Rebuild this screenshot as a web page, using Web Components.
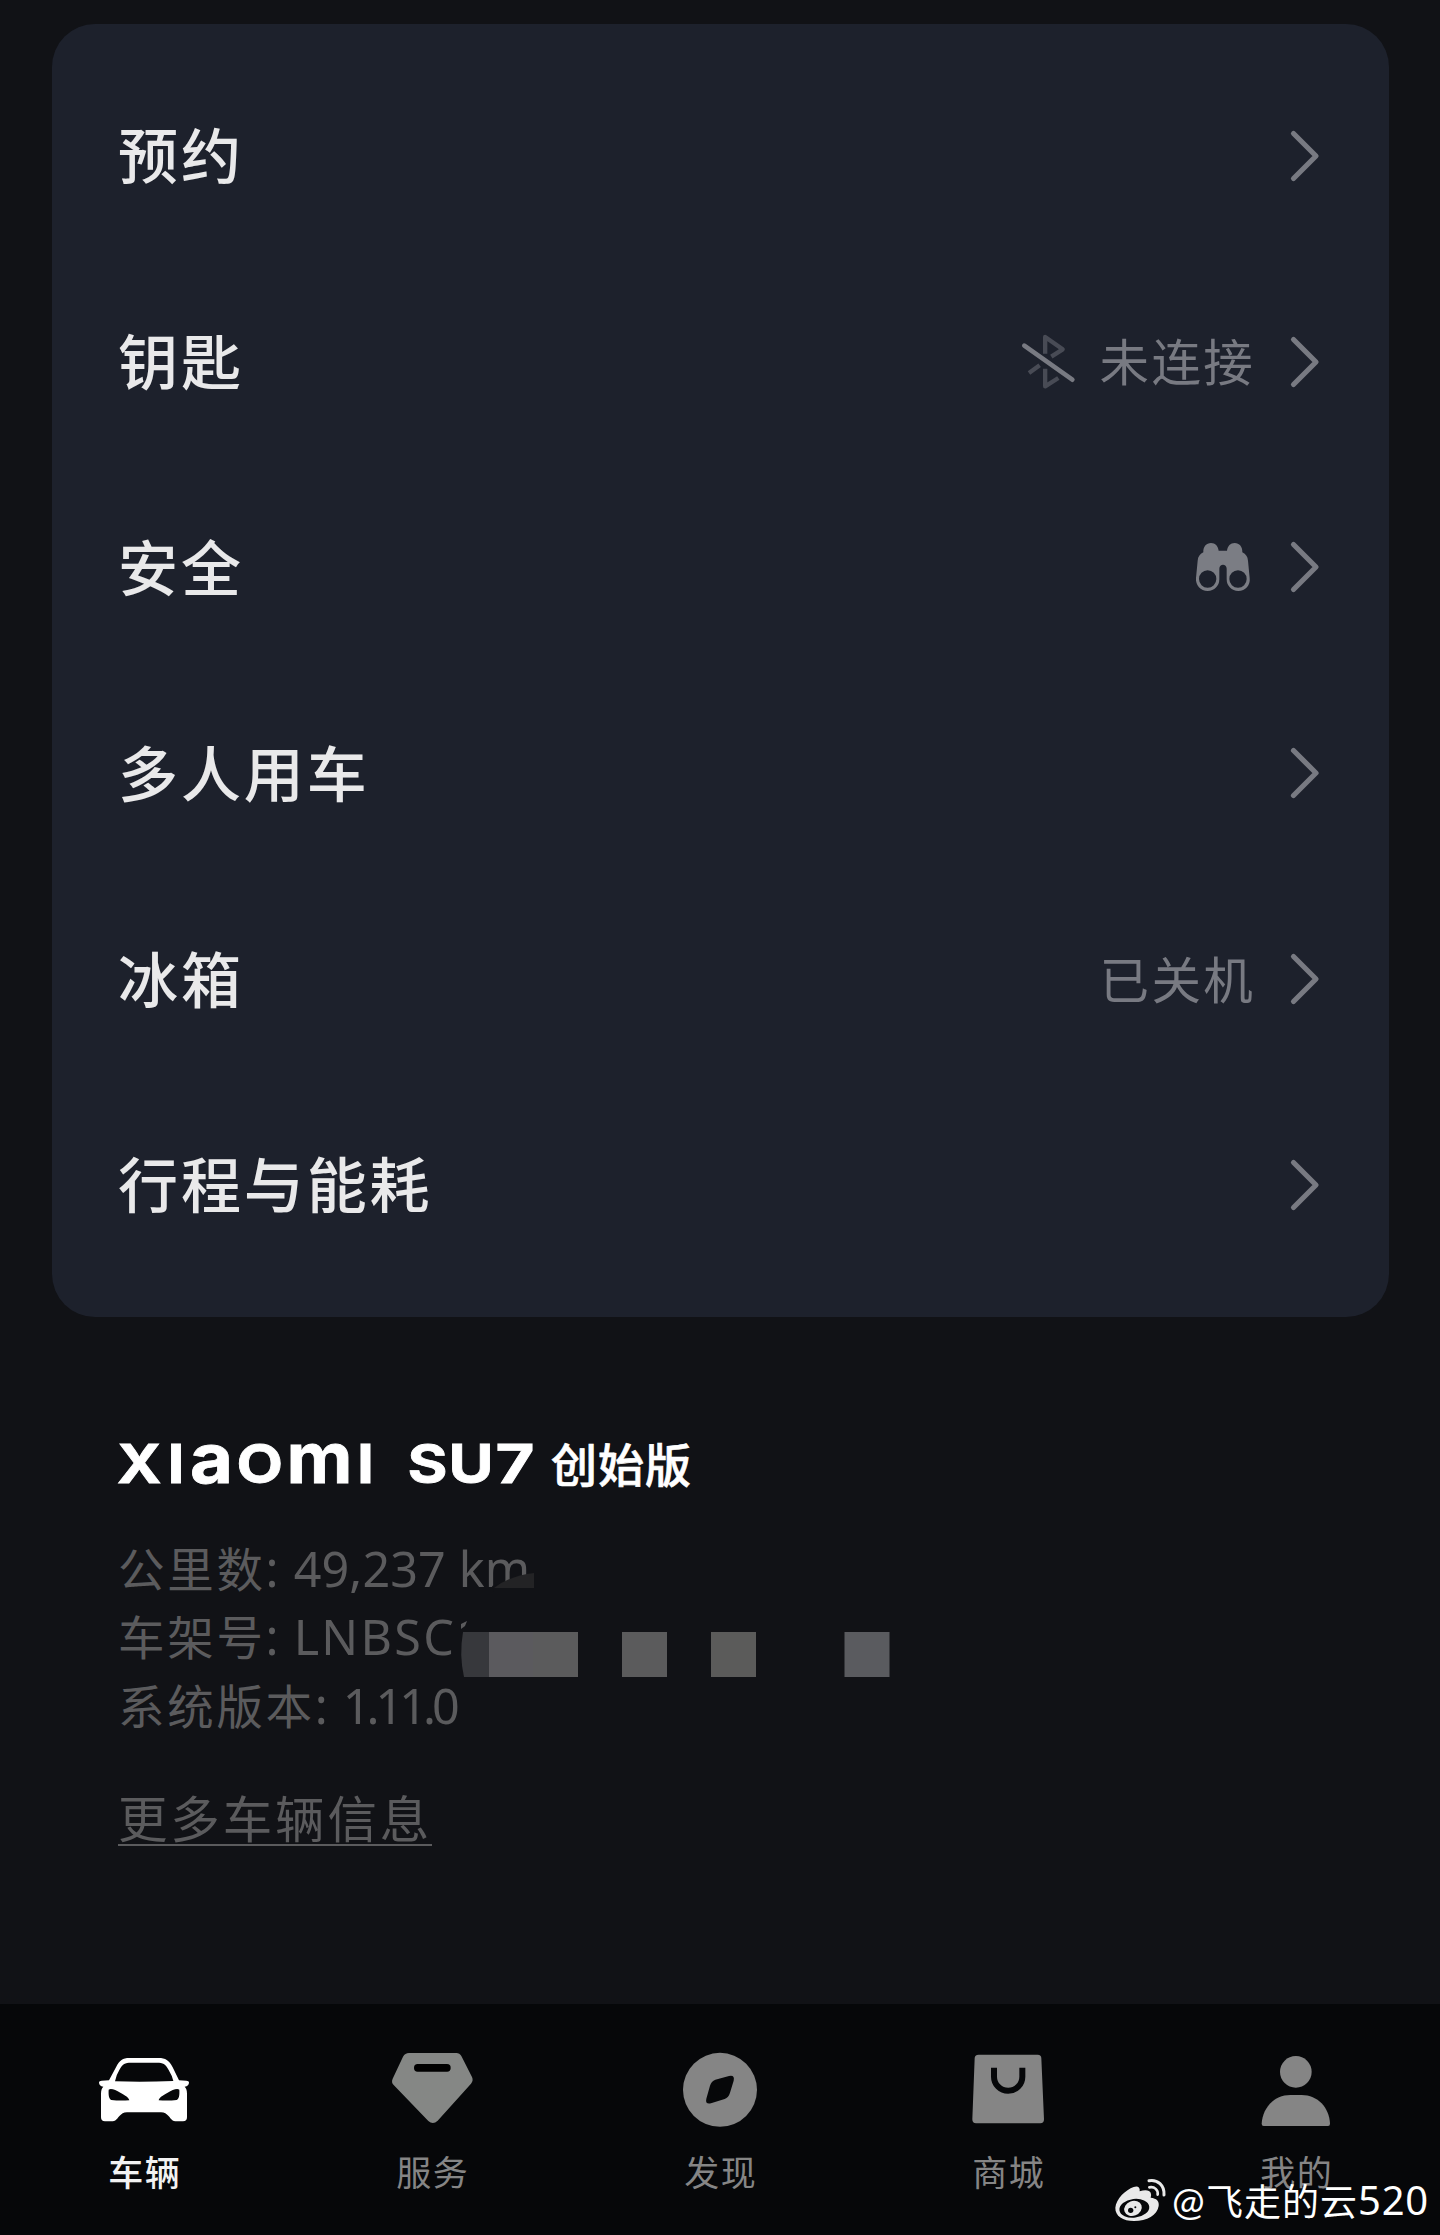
<!DOCTYPE html>
<html lang="zh-CN">
<head>
<meta charset="utf-8">
<title>车辆</title>
<style>
html,body{margin:0;background:#111216}
body{width:1440px;height:2235px;overflow:hidden;font-family:"Noto Sans","Noto Sans CJK SC",sans-serif}
</style>
</head>
<body>
<vehicle-page></vehicle-page>
<script>
const CJK = '"Noto Sans CJK SC",sans-serif';
function define(name, html) {
  const t = document.createElement('template');
  t.innerHTML = html;
  customElements.define(name, class extends HTMLElement {
    constructor() {
      super();
      this.attachShadow({mode: 'open'}).appendChild(t.content.cloneNode(true));
    }
  });
}

define('bluetooth-off-icon', `
<style>:host{display:block;width:56px;height:57px}svg{display:block}</style>
<svg width="56" height="57" viewBox="126 100 168 171" fill="none" stroke-linecap="round" stroke-linejoin="round">
<g stroke="#484b55" stroke-width="13" stroke-linecap="butt"><path d="M198.500 162V112L251 149L217 171M182 197L150 220M198.500 207V260L238 235"/></g>
<path d="M136 138L280 240" stroke="#787a82" stroke-width="14"/></svg>`);

define('sentry-icon', `
<style>:host{display:block;width:56px;height:52px;margin-right:4px}svg{display:block}</style>
<svg width="56" height="52" viewBox="645 723 168 156">
<path fill="#7b7d84" fill-rule="evenodd" d="M670 757C669 740 679 729 693 729C706 729 714 738 716 752H741C743 738 751 729 764 729C778 729 788 740 787 757C798 763 803 770 804 782L809 834C812 856 796 873 775 873C755 873 740 858 740 838V806C740 790 718 790 718 806V838C718 858 703 873 683 873C662 873 646 856 648 834L653 782C654 770 659 763 670 757ZM683 811A26 26 0 1 0 683 863A26 26 0 1 0 683 811ZM774 811A26 26 0 1 0 774 863A26 26 0 1 0 774 811Z"/></svg>`);

define('menu-row', `
<style>
:host{display:flex;align-items:center;justify-content:space-between;height:205.8px;padding:0 68.500px 0 66.500px;box-sizing:border-box;font-family:${CJK}}
.label{font-size:60px;font-weight:500;letter-spacing:2.9px;line-height:88px;color:#e9e9ea;padding-bottom:5px}
.end{display:flex;align-items:center;gap:31.500px}
.status{display:flex;align-items:center;gap:22.500px;font-size:49.500px;letter-spacing:2.3px;line-height:72px;color:#787a82}
::slotted(span){padding-bottom:3px}
svg{display:block}
</style>
<span class="label"><slot></slot></span>
<span class="end"><span class="status"><slot name="status"></slot></span>
<svg width="34" height="56" viewBox="0 0 34 56" fill="none" stroke="#787a82" stroke-width="5.200" stroke-linecap="round" stroke-linejoin="round"><path d="M6.500 5.500L29 28L6.500 50.500"/></svg></span>`);

define('menu-card', `
<style>:host{display:block;margin:24px 51px 0 51.500px;padding:29px 0;height:1293px;box-sizing:border-box;background:#1d212c;border-radius:43px}</style>
<slot></slot>`);

define('model-title', `
<style>
:host{display:flex;align-items:center;height:110px;font-family:${CJK}}
svg{display:block}
span{font-size:46px;letter-spacing:1px;line-height:68px;font-weight:500;color:#fff;-webkit-text-stroke:.7px #fff;padding:0 0 3px 9px}
text{font-family:Inter,sans-serif;font-weight:700;fill:#fff;stroke:#fff;stroke-width:.8px}
</style>
<svg width="434" height="110" viewBox="108 1408 434 110" style="margin-left:-10px">
<text y="1482.500" font-size="53.500" lengthAdjust="spacingAndGlyphs"><tspan x="117" textLength="44.500" lengthAdjust="spacingAndGlyphs">X</tspan><tspan x="167.500" textLength="17" lengthAdjust="spacingAndGlyphs">I</tspan><tspan x="190" font-size="69" textLength="43" lengthAdjust="spacingAndGlyphs">a</tspan><tspan x="236.500" textLength="46.500" lengthAdjust="spacingAndGlyphs">O</tspan><tspan x="286.500" font-size="69" textLength="66" lengthAdjust="spacingAndGlyphs">m</tspan><tspan x="357" textLength="17" lengthAdjust="spacingAndGlyphs">I</tspan><tspan> </tspan><tspan x="407.500" textLength="40" lengthAdjust="spacingAndGlyphs">S</tspan><tspan x="448.500" textLength="45" lengthAdjust="spacingAndGlyphs">U</tspan><tspan x="495.500" textLength="39" lengthAdjust="spacingAndGlyphs">7</tspan></text>
</svg><span><slot></slot></span>`);

define('info-line', `
<style>
:host{display:flex;align-items:baseline;height:68.400px;line-height:68.400px;font-size:46.500px;letter-spacing:2.700px;color:#5b5b5d;white-space:pre;font-family:${CJK}}
.v{font-family:"Noto Sans",sans-serif;font-size:48.500px;letter-spacing:1.200px}
::slotted(span){letter-spacing:var(--track,0)}
</style>
<span><slot></slot></span><span class="v">: <slot name="value"></slot></span>`);

define('redaction-mask', `
<style>:host{position:absolute;left:450px;top:1560px;display:block}svg{display:block}</style>
<svg width="450" height="125" viewBox="450 1560 450 125">
<path fill="#111216" d="M492 1586L534 1574V1592H494Z"/>
<path fill="#232325" d="M494 1588Q509 1576 534 1573V1588Z"/>
<path fill="#5b5b5d" d="M461 1624L467 1621L465 1626L461 1629Z"/>
<path fill="#37383c" d="M463 1632H489V1677H464Q459 1655 463 1632Z"/>
<path fill="#5b5a5e" d="M489 1632H534V1677H489Z"/>
<path fill="#5b5b5c" d="M533 1632H578V1677H533ZM622 1632H667V1677H622Z"/>
<path fill="#5b5b5a" d="M711 1632H756V1677H711Z"/>
<path fill="#5a5b5f" d="M844.500 1632H889.500V1677H844.500Z"/></svg>`);

define('vehicle-info', `
<style>
:host{display:block;padding:91px 118px 0;height:687px;box-sizing:border-box}
.lines{padding-top:15px}
.more{display:inline-block;margin-top:45px;font-family:${CJK};font-size:49.500px;letter-spacing:2.850px;line-height:68px;height:61px;color:#5b5b5d;border-bottom:2.500px solid #5b5b5d;text-decoration:none}
</style>
<model-title>创始版</model-title>
<div class="lines">
<info-line style="--track:.1px">公里数<span slot="value">49,237 km</span></info-line>
<info-line style="--track:2.300px">车架号<span slot="value">LNBSC</span></info-line>
<info-line style="--track:-4px">系统版本<span slot="value">1.11.0</span></info-line>
</div>
<a class="more">更多车辆信息</a>
<redaction-mask></redaction-mask>`);

define('tab-item', `
<style>
:host{display:flex;flex-direction:column;align-items:center;flex:1;padding-top:42px;color:#858585;font-family:${CJK}}
::slotted(svg){display:block;width:96px;height:84px}
span{font-size:35px;line-height:50px;letter-spacing:1.700px;margin-top:15.500px;padding-left:1.700px}
</style>
<slot name="icon"></slot><span><slot></slot></span>`);

define('tab-bar', `
<style>:host{display:flex;height:231px;background:#060709}</style>
<tab-item style="color:#f2f2f2;font-weight:500"><svg slot="icon" viewBox="108 198 288 252">
<path fill="#fff" fill-rule="evenodd" d="M117 307Q117 302 125 302L147 301L168 262C179 240 188 234 208 234H296C316 234 327 240 338 262L357 301L379 302Q387 302 387 307C387 314 383 320 374 320Q381 326 381 341V412Q381 424 369 424H346C334 424 330 409 316 400Q311 397 303 397H201Q193 397 188 400C174 409 170 424 158 424H135Q123 424 123 412V341Q123 326 130 320C121 320 117 314 117 307ZM165 304Q250 307 340 303Q337 288 326 270C316 251 309 248 291 248H213C195 248 188 251 178 270Q168 286 165 304ZM146 329C145 347 147 356 154 360Q178 363 208 361C207 353 196 346 181 338C167 330 153 324 146 329ZM358 329C351 324 337 330 323 338C308 346 297 353 296 361Q326 363 350 360C357 356 359 347 358 329Z"/></svg>车辆</tab-item>
<tab-item><svg slot="icon" viewBox="972 198 288 252"><path fill="#858785" d="M1047 219H1189Q1199 219 1204 228L1236 291Q1241 302 1233 311L1133 422Q1119 436 1105 423L1001 315Q993 307 998 296L1029 230Q1035 219 1047 219Z"/><rect x="1062" y="252" width="110" height="23" rx="11" fill="#000"/></svg>服务</tab-item>
<tab-item><svg slot="icon" viewBox="96 198 288 252"><circle cx="240" cy="329.500" r="111" fill="#858585"/><path fill="#060709" d="M226 299L267 288Q285 284 281 302L270 338Q266 352 254 357L213 370Q195 374 199 356L210 317Q214 303 226 299Z"/></svg>发现</tab-item>
<tab-item><svg slot="icon" viewBox="960 198 288 252"><path fill="#858585" d="M1016 224H1193Q1204 224 1204 235L1212 418Q1212 430 1201 430H1008Q997 430 997 418L1004 235Q1004 224 1016 224Z"/><path d="M1062 263V290A42.500 42.500 0 0 0 1147 290V263" fill="none" stroke="#060709" stroke-width="18"/></svg>商城</tab-item>
<tab-item><svg slot="icon" viewBox="504 198 288 252" fill="#858585"><circle cx="647.500" cy="275.500" r="47.500"/><path d="M545 431C548 383 583 345 631 345H665C713 345 748 383 750 431Q750 438 744 438H551Q545 438 545 431Z"/></svg>我的</tab-item>`);

define('weibo-watermark', `
<style>
:host{position:absolute;left:1113px;top:2174px;display:flex;align-items:center;height:52px;color:#fff;font-family:${CJK}}
svg{display:block}
span{font-size:37px;letter-spacing:1px;line-height:52px}
.at{font-family:Lato,sans-serif;font-size:39px;letter-spacing:0;margin-left:4px;width:34px}
.n{font-family:"Noto Sans",sans-serif;font-size:40px;letter-spacing:.800px}
</style>
<svg width="55" height="46" viewBox="100 588 165 138">
<path fill="#e9e9e9" d="M162 618C174 613 182 619 180 631C196 625 210 627 213 635Q216 642 213 650C231 652 239 660 237 675C233 702 202 720 163 720C130 720 106 705 107 680C109 654 138 626 162 618Z"/>
<ellipse cx="164" cy="682" rx="45" ry="28" fill="#060709" transform="rotate(-7 164 682)"/>
<ellipse cx="160" cy="682" rx="27" ry="22" fill="#e9e9e9" transform="rotate(-20 160 682)"/>
<circle cx="153" cy="688" r="8" fill="#060709"/><circle cx="167" cy="679" r="3" fill="#060709"/>
<g fill="none" stroke="#e9e9e9" stroke-width="9" stroke-linecap="round"><path d="M208 599C234 594 255 614 253 642" /><path d="M209 619C225 616 236 627 234 641" stroke-width="8"/></g></svg>
<span class="at">@</span><span>飞走的云</span><span class="n">520</span>`);

define('vehicle-page', `
<style>:host{display:block;position:relative;width:1440px;height:2235px;background:#111216;overflow:hidden}
main{display:flow-root}</style>
<main>
<menu-card>
<menu-row>预约</menu-row>
<menu-row>钥匙<bluetooth-off-icon slot="status"></bluetooth-off-icon><span slot="status">未连接</span></menu-row>
<menu-row>安全<sentry-icon slot="status"></sentry-icon></menu-row>
<menu-row>多人用车</menu-row>
<menu-row>冰箱<span slot="status">已关机</span></menu-row>
<menu-row>行程与能耗</menu-row>
</menu-card>
<vehicle-info></vehicle-info>
</main>
<tab-bar></tab-bar>
<weibo-watermark></weibo-watermark>`);
</script>
</body>
</html>
